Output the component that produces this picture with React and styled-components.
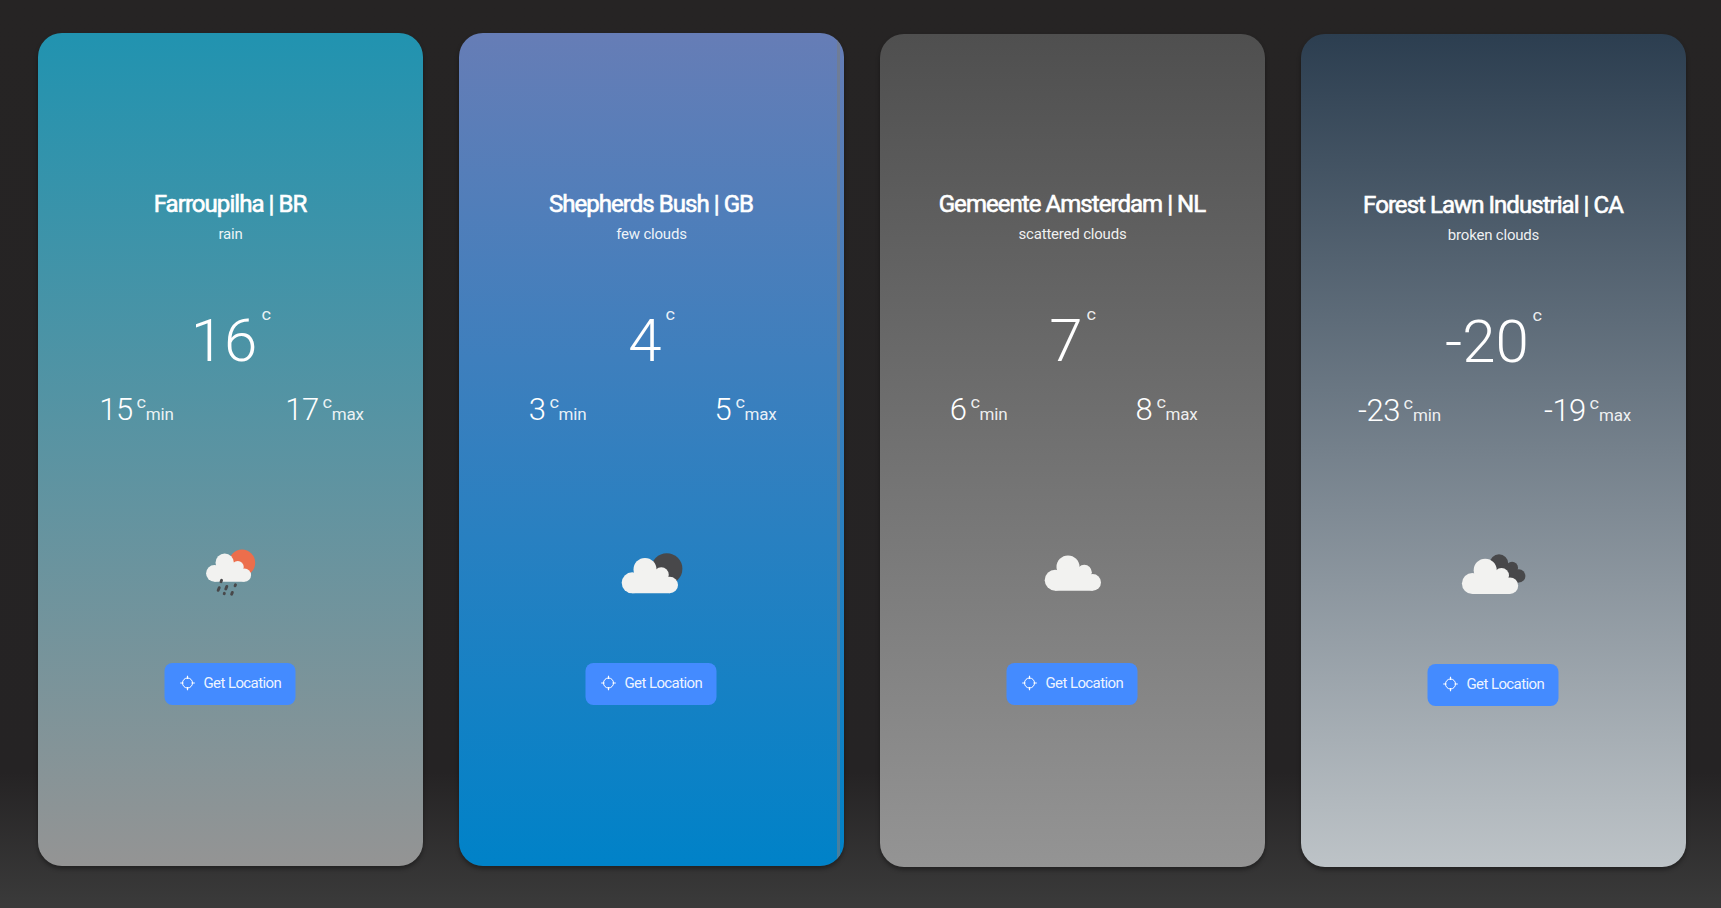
import React from "react";
import styled, { createGlobalStyle } from "styled-components";

const GlobalStyle = createGlobalStyle`
  *, *::before, *::after { box-sizing: border-box; }
  body {
    margin: 0;
    min-height: 100vh;
    font-family: Roboto, "Liberation Sans", sans-serif;
    color: #fff;
    background: linear-gradient(to bottom, #262424 0, #252324 772px, #3a3a3a 904px, #3a3a3a 100%) no-repeat;
  }
`;

const Page = styled.main`
  display: flex;
  align-items: flex-start;
  gap: 36px;
  height: 908px;
  padding: 33px 35px 0 38px;
  overflow: hidden;
`;

const Card = styled.section`
  display: flex;
  flex-direction: column;
  align-items: center;
  width: 385px;
  height: 833px;
  flex: none;
  margin-top: ${(p) => p.$drop}px;
  padding-top: ${(p) => p.$top}px;
  border-radius: 24px;
  overflow: hidden;
  position: relative;
  background: linear-gradient(to bottom, ${(p) => p.$from}, ${(p) => p.$to});
  box-shadow: 0 3px 4px rgba(0, 0, 0, 0.35);
`;

const ScrollEdge = styled.span`
  position: absolute;
  top: 0;
  bottom: 0;
  right: 4px;
  width: 3px;
  background: rgba(120, 125, 130, 0.6);
`;

const City = styled.h1`
  margin: 0;
  padding-right: 1px;
  height: 31px;
  line-height: 30px;
  font-size: 24px;
  font-weight: 400;
  letter-spacing: -0.95px;
  -webkit-text-stroke: 0.6px #fff;
  white-space: nowrap;
`;

const Description = styled.p`
  margin: 0;
  height: 28px;
  line-height: 28px;
  font-size: 15px;
  letter-spacing: -0.2px;
  color: rgba(255, 255, 255, 0.92);
`;

const Temperature = styled.div`
  display: flex;
  align-items: flex-start;
  height: 70px;
  margin-top: 58px;
  line-height: 70px;
  font-size: 60px;
  font-weight: 300;
`;

const Unit = styled.sup`
  font-size: 16.5px;
  font-weight: 400;
  line-height: 20px;
  letter-spacing: 0;
  margin-left: ${(p) => p.$gap}px;
  margin-top: ${(p) => p.$top}px;
  color: rgba(255, 255, 255, 0.9);
  transform: scaleX(1.1);
`;

const Range = styled.div`
  display: grid;
  grid-template-columns: 1fr 1fr;
  width: 376px;
  margin-top: 15px;
`;

const Limit = styled.div`
  display: flex;
  align-items: flex-start;
  justify-content: center;
  height: 38px;
  line-height: 38px;
  font-size: 31px;
  font-weight: 300;
  letter-spacing: -0.5px;
`;

const LimitLabel = styled.span`
  font-size: 17px;
  font-weight: 400;
  line-height: 47px;
  letter-spacing: -0.2px;
  color: rgba(255, 255, 255, 0.9);
`;

const WeatherIcon = styled.svg`
  display: block;
  width: 100px;
  height: 100px;
  margin: 95px 1px 0 0;
`;

const LocationButton = styled.button`
  display: flex;
  align-items: center;
  gap: 8px;
  width: 131px;
  height: 42px;
  margin: 39px 0 0;
  padding: 0 0 2px 15px;
  border: 0;
  border-radius: 8px;
  background: #448bff;
  color: rgba(255, 255, 255, 0.92);
  font: 400 15px/40px Roboto, "Liberation Sans", sans-serif;
  letter-spacing: -0.6px;
  white-space: nowrap;
  transform: translateX(-0.5px);
`;

const CloudShape = ({ fill, transform }) => (
  <g fill={fill} transform={transform}>
    <circle cx="43.5" cy="45.5" r="11.5" />
    <circle cx="59.8" cy="50.8" r="7.5" />
    <circle cx="68.2" cy="61" r="8.3" />
    <circle cx="30.7" cy="58.8" r="10.5" />
    <path d="M30.7 52 L43 46 L60 49 L68.2 60 V69.3 H30.7Z" />
  </g>
);

const light = "#f2f2f0";
const dark = "#48484a";

const drops = [
  [40.8, 57, 1.4],
  [38.2, 65, 2.6],
  [45.8, 63.7, 2.6],
  [54.8, 61.3, 1],
  [43.8, 69.5, 0.4],
  [51.5, 69.3, 1.8],
];

const pictures = {
  rain: (
    <>
      <circle cx="61.5" cy="38.8" r="13.2" fill="#ec6e4c" />
      <CloudShape fill={light} transform="translate(9.4 2.3) scale(0.8)" />
      <g stroke={dark} strokeWidth="2.9" strokeLinecap="round">
        {drops.map(([x, y, l]) => (
          <line key={x} x1={x + l * 0.2} y1={y - l / 2} x2={x - l * 0.2} y2={y + l / 2} />
        ))}
      </g>
    </>
  ),
  few: (
    <>
      <circle cx="65.3" cy="44.8" r="15.6" fill={dark} />
      <CloudShape fill={light} />
    </>
  ),
  scattered: <CloudShape fill={light} transform="translate(2 -2.6)" />,
  broken: (
    <>
      <CloudShape fill={dark} transform="translate(20.7 2.1) scale(0.8)" />
      <CloudShape fill={light} transform="translate(-1.8 -0.3)" />
    </>
  ),
};

const Crosshair = () => (
  <svg width="16" height="16" viewBox="0 0 16 16" fill="none" stroke="#fff" strokeWidth="1">
    <circle cx="8" cy="8" r="5" />
    <path d="M8 .7V4M8 12V15.3M.7 8H4M12 8H15.3" strokeWidth="1.2" />
  </svg>
);

const cards = [
  { city: "Farroupilha | BR", text: "rain", now: "16", min: "15", max: "17", icon: "rain", from: "#2193b0", to: "#949494", drop: 0 },
  { city: "Shepherds Bush | GB", text: "few clouds", now: "4", min: "3", max: "5", icon: "few", from: "#667db6", to: "#0082c8", drop: 0, edge: true },
  { city: "Gemeente Amsterdam | NL", text: "scattered clouds", now: "7", min: "6", max: "8", icon: "scattered", from: "#4f4f4f", to: "#949494", drop: 1, lift: 1 },
  { city: "Forest Lawn Industrial | CA", text: "broken clouds", now: "-20", min: "-23", max: "-19", icon: "broken", from: "#2c3e50", to: "#bdc3c7", drop: 1 },
];

export default function App() {
  return (
    <>
      <GlobalStyle />
      <Page>
        {cards.map((c) => (
          <Card key={c.city} $from={c.from} $to={c.to} $drop={c.drop} $top={156 - (c.lift || 0)}>
            {c.edge && <ScrollEdge />}
            <City>{c.city}</City>
            <Description>{c.text}</Description>
            <Temperature>
              {c.now}
              <Unit $gap={4.5} $top={-1}>c</Unit>
            </Temperature>
            <Range>
              <Limit>
                {c.min}
                <Unit $gap={4.5} $top={2}>c</Unit>
                <LimitLabel>min</LimitLabel>
              </Limit>
              <Limit>
                {c.max}
                <Unit $gap={4.5} $top={2}>c</Unit>
                <LimitLabel>max</LimitLabel>
              </Limit>
            </Range>
            <WeatherIcon viewBox="-0.5 0 100 100">{pictures[c.icon]}</WeatherIcon>
            <LocationButton>
              <Crosshair />
              Get Location
            </LocationButton>
          </Card>
        ))}
      </Page>
    </>
  );
}
